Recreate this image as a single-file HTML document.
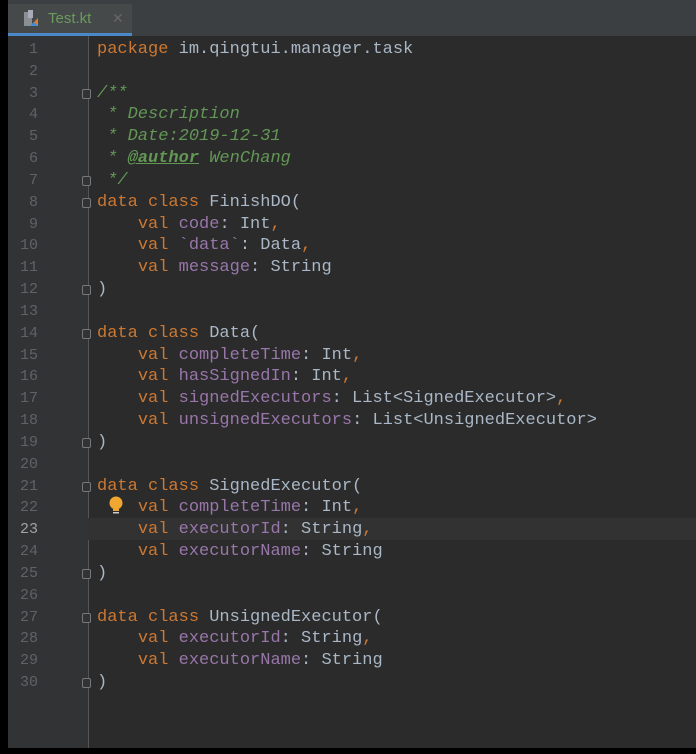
<!DOCTYPE html><html><head><style>
body{margin:0;width:696px;height:754px;background:#000;overflow:hidden;position:relative;font-family:"Liberation Mono",monospace}
#tabbar{position:absolute;left:8px;top:0;width:688px;height:36px;background:#3c3f41}
#tab{position:absolute;left:0;top:4px;width:124px;height:32px;background:#45494a;border-bottom:3px solid #4a88c7;box-sizing:border-box}
#tab span{position:absolute;left:40px;top:6px;font:15px "Liberation Sans",sans-serif;color:#6a9b5a}
#tab i{position:absolute;left:104px;top:6px;font:14px "Liberation Sans",sans-serif;color:#666;font-style:normal}
#gut{position:absolute;left:8px;top:36px;width:80px;height:712px;background:#313335}
#ed{position:absolute;left:88px;top:36px;width:608px;height:712px;background:#2b2b2b;border-left:1px solid #555}
#cur{position:absolute;left:88px;top:518px;width:608px;height:22px;background:#323232}
.ln{position:absolute;left:8px;top:39px;width:30px;text-align:right;font-size:15px;line-height:21.83px;color:#606366;white-space:pre}
pre{position:absolute;left:97px;top:39px;margin:0;font-size:17px;line-height:21.83px;color:#a9b7c6}
.k{color:#cc7832}.p{color:#9876aa}.c{color:#629755;font-style:italic}.u{text-decoration:underline}
.f{position:absolute;left:82px;width:9px;height:10px;border:1px solid #777;border-radius:2px;box-sizing:border-box;background:#313335}
</style></head><body>
<div id="tabbar"><div id="tab"><svg style="position:absolute;left:14px;top:6px" width="18" height="18"><rect x="2" y="2" width="8" height="14" fill="#8a8f93"/><rect x="6" y="0" width="5" height="8" fill="#aab"/><path d="M8 16 L16 8 L16 16Z" fill="#e07b2b"/><path d="M8 16 L12 12 L16 16Z" fill="#3d8ee0"/></svg><span>Test.kt</span><i>✕</i></div></div>
<div id="gut"></div><div id="ed"></div><div id="cur"></div>
<div class="ln">1
2
3
4
5
6
7
8
9
10
11
12
13
14
15
16
17
18
19
20
21
22
<span style="color:#a4a3a3">23</span>
24
25
26
27
28
29
30</div>
<div class="f" style="top:89px"></div><div class="f" style="top:176px"></div><div class="f" style="top:198px"></div><div class="f" style="top:285px"></div><div class="f" style="top:329px"></div><div class="f" style="top:438px"></div><div class="f" style="top:482px"></div><div class="f" style="top:569px"></div><div class="f" style="top:613px"></div><div class="f" style="top:678px"></div>
<svg style="position:absolute;left:108px;top:496px" width="16" height="22"><circle cx="8" cy="7" r="6.5" fill="#f0a732"/><rect x="5" y="13" width="6" height="2" fill="#f0a732"/><rect x="5" y="16" width="6" height="1.5" fill="#ccc"/></svg>
<pre><span class="k">package</span> im.qingtui.manager.task

<span class="c">/**
 * Description
 * Date:2019-12-31
 * <span class="u" style="font-weight:bold">@author</span> WenChang
 */</span>
<span class="k">data class</span> FinishDO(
    <span class="k">val</span> <span class="p">code</span>: Int<span class="k">,</span>
    <span class="k">val</span> <span class="p">`data`</span>: Data<span class="k">,</span>
    <span class="k">val</span> <span class="p">message</span>: String
)

<span class="k">data class</span> Data(
    <span class="k">val</span> <span class="p">completeTime</span>: Int<span class="k">,</span>
    <span class="k">val</span> <span class="p">hasSignedIn</span>: Int<span class="k">,</span>
    <span class="k">val</span> <span class="p">signedExecutors</span>: List&lt;SignedExecutor&gt;<span class="k">,</span>
    <span class="k">val</span> <span class="p">unsignedExecutors</span>: List&lt;UnsignedExecutor&gt;
)

<span class="k">data class</span> SignedExecutor(
    <span class="k">val</span> <span class="p">completeTime</span>: Int<span class="k">,</span>
    <span class="k">val</span> <span class="p">executorId</span>: String<span class="k">,</span>
    <span class="k">val</span> <span class="p">executorName</span>: String
)

<span class="k">data class</span> UnsignedExecutor(
    <span class="k">val</span> <span class="p">executorId</span>: String<span class="k">,</span>
    <span class="k">val</span> <span class="p">executorName</span>: String
)</pre>
</body></html>
